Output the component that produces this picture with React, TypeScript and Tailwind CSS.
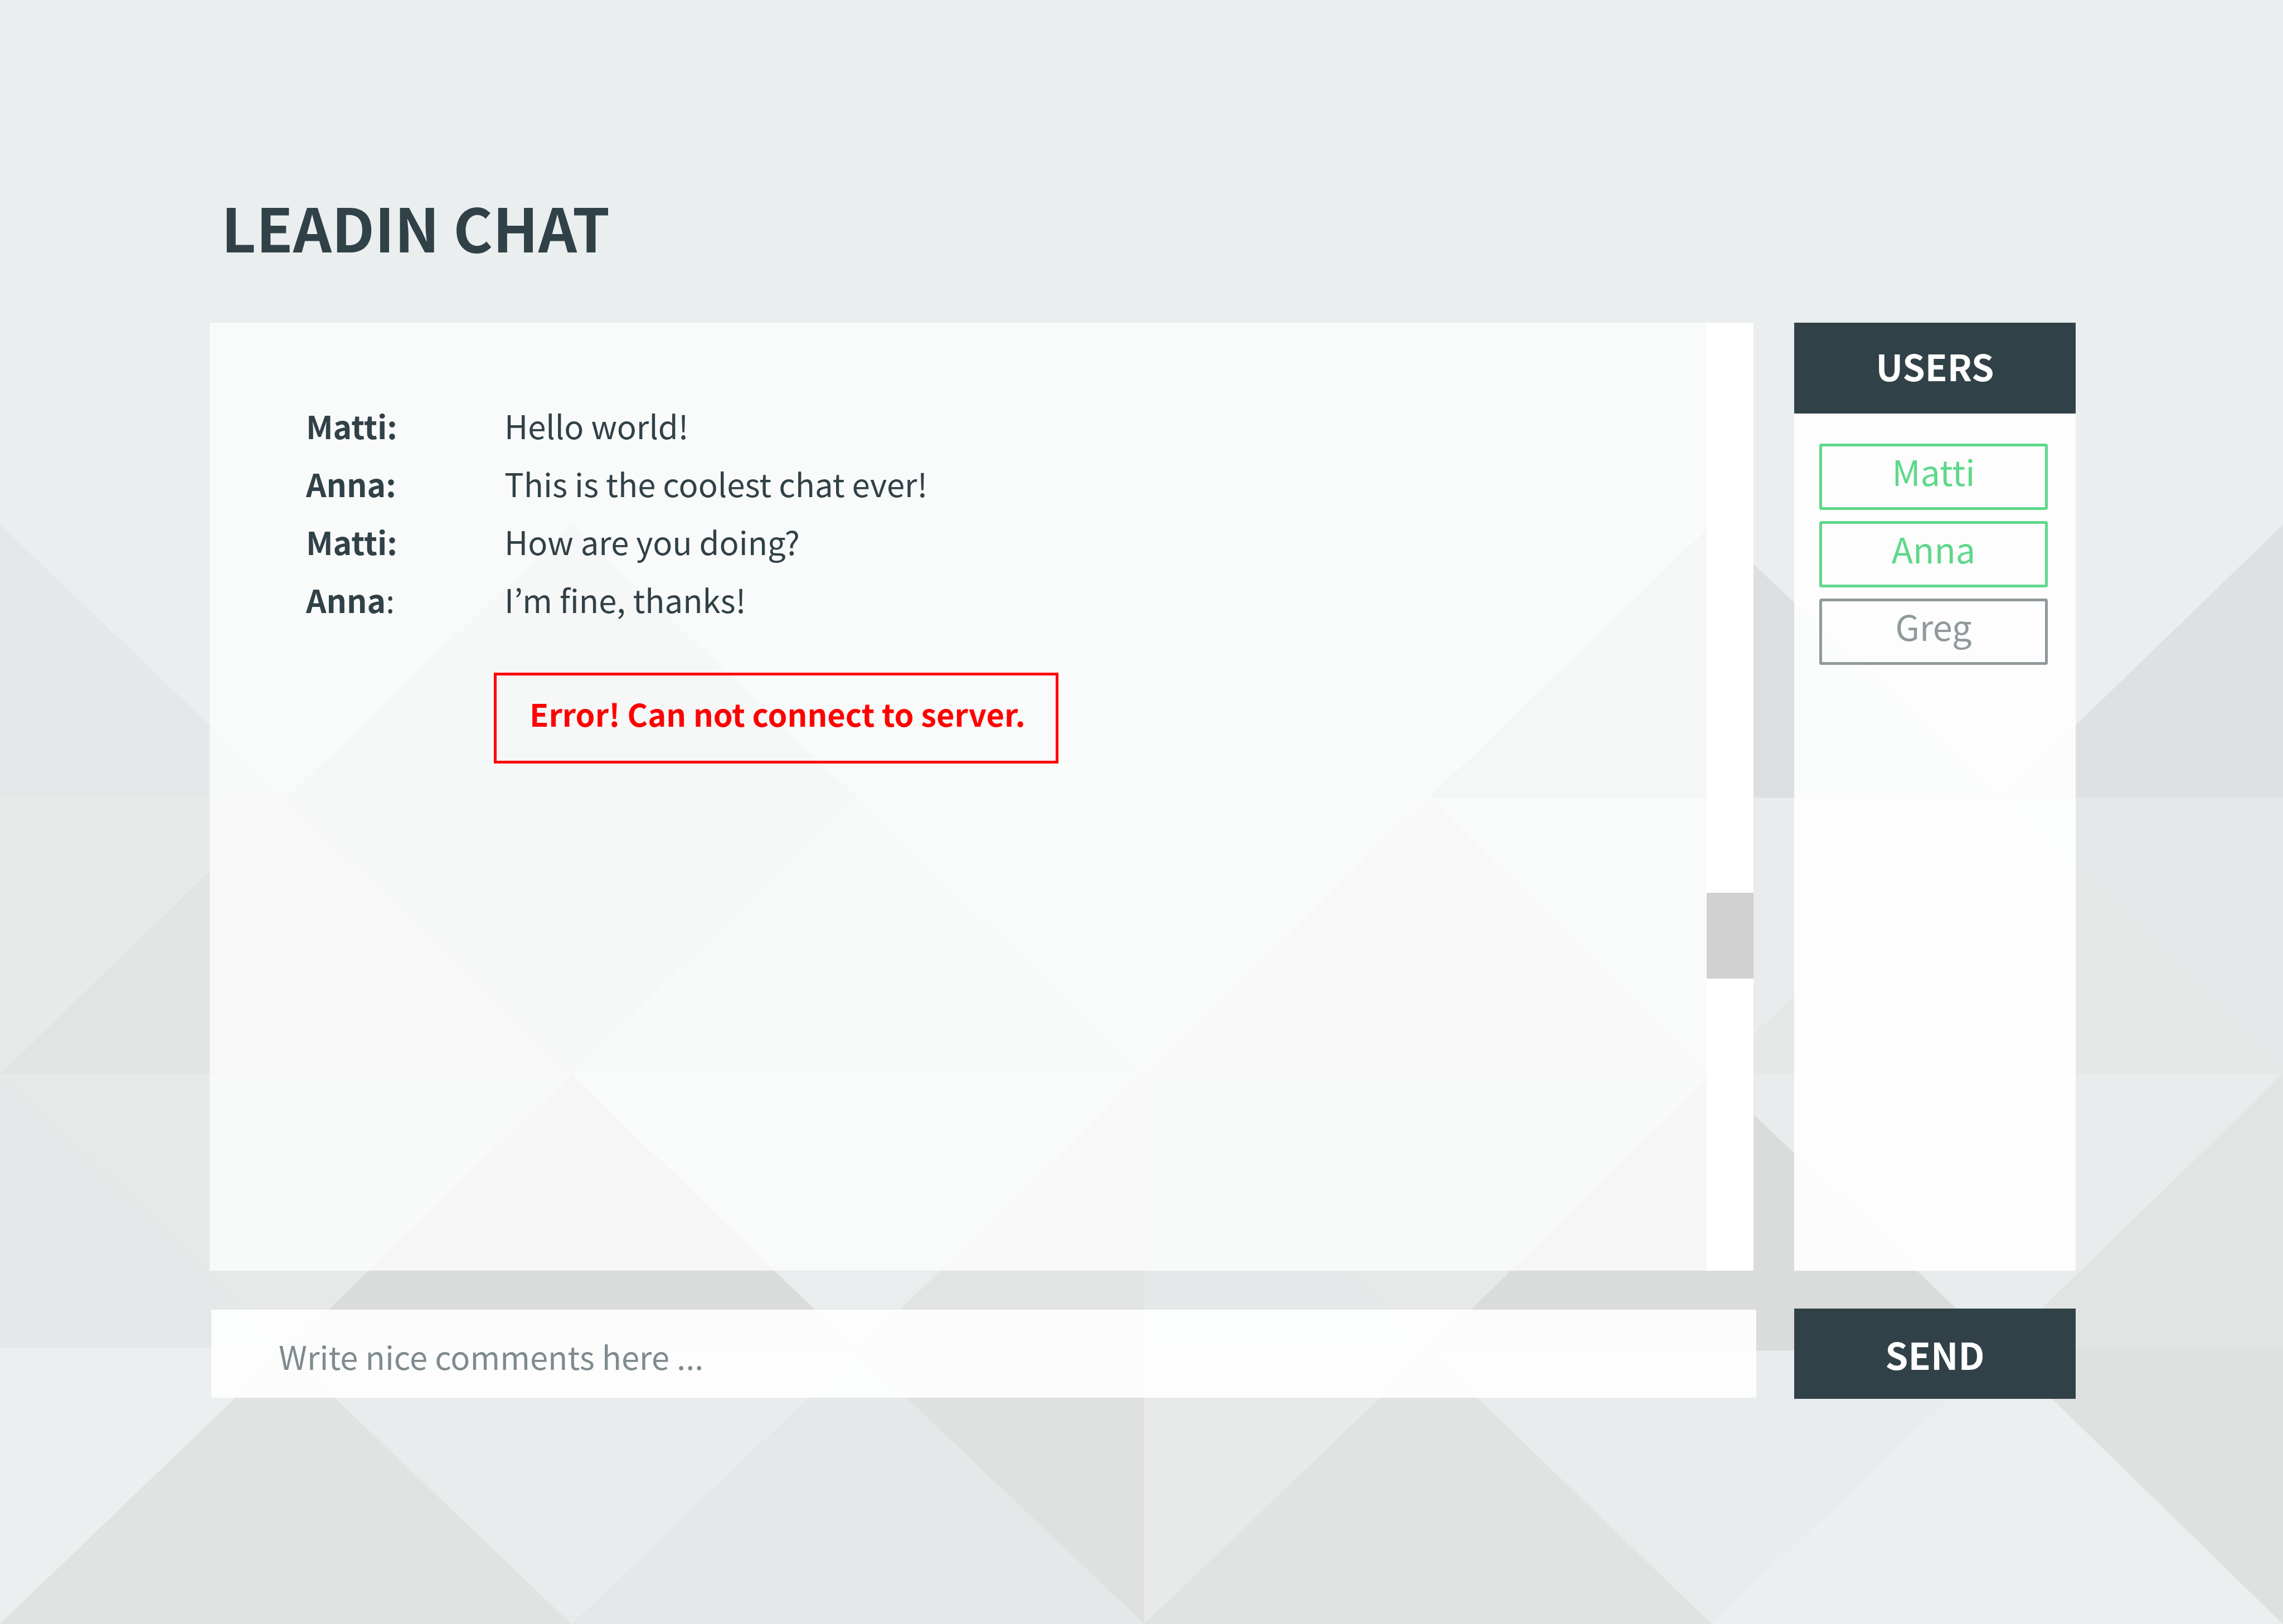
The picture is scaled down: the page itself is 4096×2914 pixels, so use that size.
import { useState } from "react";

type Message = { author: string; text: string; colon?: string };

const messages: Message[] = [
  { author: "Matti:", text: "Hello world!" },
  { author: "Anna:", text: "This is the coolest chat ever!" },
  { author: "Matti:", text: "How are you doing?" },
  { author: "Anna", colon: ":", text: "I’m fine, thanks!" },
];

const users = [
  { name: "Matti", online: true },
  { name: "Anna", online: true },
  { name: "Greg", online: false },
];

const facets: [string, string][] = [
  ["0,1322 720,2010 0,2010", "#e4e8e9"],
  ["0,2010 720,2010 0,2706", "#e7eae9"],
  ["720,2010 1440,2706 0,2706", "#e1e4e3"],
  ["1440,1322 2160,2010 1440,2706 720,2010", "#dde1e1"],
  ["2160,2010 2883,2706 1440,2706", "#e6eae9"],
  ["4312,1322 5040,2010 3600,2010", "#dbdfdf"],
  ["3600,2010 4312,2706 2883,2706", "#e2e4e3"],
  ["3600,2010 5040,2010 4312,2706", "#e8eced"],
  ["5751,1322 5751,2010 5040,2010", "#dde1e1"],
  ["5040,2010 5751,2010 5751,2706", "#e4e8e9"],
  ["5040,2010 5751,2706 4312,2706", "#e6e8e7"],
  ["0,2706 720,3397 0,3397", "#e4e8e9"],
  ["0,2706 1440,2706 720,3397", "#e6e9e8"],
  ["1440,2706 2160,3403 720,3403", "#dadcdb"],
  ["1440,2706 2883,2706 2160,3403", "#e9edee"],
  ["2883,2706 2883,3403 2160,3403", "#e2e4e3"],
  ["2883,2706 3600,3403 2883,3403", "#e4e8e9"],
  ["2883,2706 4312,2706 3600,3403", "#e6e9e8"],
  ["4312,2706 5040,3403 3600,3403", "#dadcdb"],
  ["4312,2706 5751,2706 5040,3403", "#e8eced"],
  ["5751,2706 5751,3397 5040,3397", "#e2e4e3"],
  ["0,3397 720,3397 0,4091", "#ebeff0"],
  ["720,3400 1440,4091 0,4091", "#e1e3e2"],
  ["720,3403 2160,3403 1440,4091", "#e8eced"],
  ["2160,3403 2883,4091 1440,4091", "#e4e8e9"],
  ["2160,3403 2883,3403 2883,4091", "#dfe1e0"],
  ["2883,3403 3600,3403 2883,4091", "#e8eae9"],
  ["3600,3403 4312,4091 2883,4091", "#e1e3e2"],
  ["3600,3403 5040,3403 4312,4091", "#e8eced"],
  ["5040,3403 5751,4091 4312,4091", "#ebeff0"],
  ["5040,3397 5751,3397 5751,4091", "#dfe1e0"],
];

function Backdrop() {
  return (
    <svg
      className="absolute inset-0 -z-10 h-full w-full"
      viewBox="0 0 5751 4091"
      preserveAspectRatio="none"
      aria-hidden="true"
    >
      <rect width="5751" height="4091" fill="#eaeeee" />
      {facets.map(([points, fill]) => (
        <polygon key={points} points={points} fill={fill} stroke={fill} strokeWidth="1" />
      ))}
    </svg>
  );
}

function MessageRow({ author, colon, text }: Message) {
  return (
    <div className="flex">
      <dt className="w-[356px] shrink-0 text-[57px] font-semibold">
        {author}
        {colon && <span className="font-normal">{colon}</span>}
      </dt>
      <dd>{text}</dd>
    </div>
  );
}

export default function App() {
  const [draft, setDraft] = useState("");

  return (
    <main className="relative isolate flex min-h-screen flex-col pt-[326px] pr-[372px] pb-[404px] pl-[376px] font-['Noto_Sans_CJK_KR','Noto_Sans',sans-serif] text-[58px] leading-[104px] text-[#314148]">
      <Backdrop />

      <h1 className="mb-[93px] pl-[21px] text-[108px] leading-[160px] font-semibold">LEADIN CHAT</h1>

      <div className="flex flex-1 gap-[73px]">
        <section aria-label="Messages" className="flex flex-1 bg-white/73">
          <div className="flex-1 pt-[132px]">
            <dl className="pl-[173px]">
              {messages.map((m) => (
                <MessageRow key={m.text} {...m} />
              ))}
            </dl>
            <p
              role="alert"
              className="mt-[80px] ml-[510px] w-fit border-5 border-[#ff0000] pt-4 pr-[54px] pb-[33px] pl-[59px] text-[56px] font-semibold text-[#ff0000]"
            >
              Error! Can not connect to server.
            </p>
          </div>
          <div className="w-[84px] bg-white pt-[1023px]">
            <div className="h-[154px] bg-[#d1d1d1]" />
          </div>
        </section>

        <aside className="w-[505px] bg-white/90">
          <h2 className="flex h-[163px] items-center justify-center bg-[#314148] pb-[10px] text-[65px] font-semibold text-white">
            USERS
          </h2>
          <ul className="flex flex-col gap-5 pt-[54px] pr-[50px] pl-[45px] text-[63px]">
            {users.map((u) => (
              <li key={u.name}>
                <button
                  type="button"
                  className={
                    u.online
                      ? "flex h-[119px] w-full items-center justify-center rounded-[4px] border-5 border-[#5fd88a] pb-[22px] text-[#5fd88a]"
                      : "flex h-[119px] w-full items-center justify-center rounded-[4px] border-5 border-[#90999c] pb-[22px] text-[#90999c]"
                  }
                >
                  {u.name}
                </button>
              </li>
            ))}
          </ul>
        </aside>
      </div>

      <form
        className="mt-[68px] flex items-center gap-[68px] pl-[3px]"
        onSubmit={(e) => {
          e.preventDefault();
          setDraft("");
        }}
      >
        <input
          type="text"
          aria-label="Message"
          placeholder="Write nice comments here ..."
          value={draft}
          onChange={(e) => setDraft(e.target.value)}
          className="h-[158px] min-w-0 flex-1 bg-white/90 pt-2 pl-[121px] outline-none placeholder:text-[#808b8f]"
        />
        <button type="submit" className="h-[162px] w-[505px] bg-[#314148] text-[66px] font-semibold text-white">
          SEND
        </button>
      </form>
    </main>
  );
}
